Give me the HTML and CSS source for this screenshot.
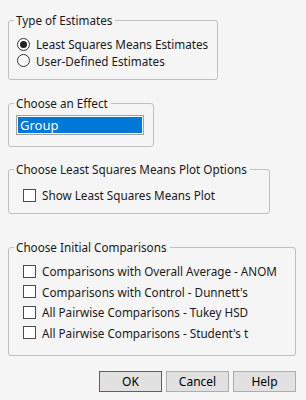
FILE: index.html
```html
<!DOCTYPE html>
<html lang="en">
<head>
    <meta charset="UTF-8">
    <title>Least Squares Means</title>
    <link rel="stylesheet" href="styles.css">
</head>
<body>
    <div class="dialog">
        <fieldset class="group type">
            <legend>Type of Estimates</legend>
            <label class="row"><span class="radio checked"></span>Least Squares Means Estimates</label>
            <label class="row"><span class="radio"></span>User-Defined Estimates</label>
        </fieldset>

        <fieldset class="group effect">
            <legend>Choose an Effect</legend>
            <div class="listbox"><div class="item selected">Group</div></div>
        </fieldset>

        <fieldset class="group plot">
            <legend>Choose Least Squares Means Plot Options</legend>
            <label class="row"><span class="check"></span>Show Least Squares Means Plot</label>
        </fieldset>

        <fieldset class="group compare">
            <legend>Choose Initial Comparisons</legend>
            <label class="row"><span class="check"></span>Comparisons with Overall Average - ANOM</label>
            <label class="row"><span class="check"></span>Comparisons with Control - Dunnett's</label>
            <label class="row"><span class="check"></span>All Pairwise Comparisons - Tukey HSD</label>
            <label class="row"><span class="check"></span>All Pairwise Comparisons - Student's t</label>
        </fieldset>

        <div class="buttons">
            <button class="default">OK</button>
            <button>Cancel</button>
            <button>Help</button>
        </div>
    </div>
</body>
</html>
```

FILE: styles.css
```css
body {
    margin: 0;
    background: #f5f5f5;
    font-family: 'Noto Sans', 'Open Sans', sans-serif;
    font-size: 11.7px;
    color: #1a1a1a;
}
.dialog {
    padding: 12px 0 0 8px;
}
.group {
    margin: 0;
    padding: 0;
    border: 1px solid #c0c0c0;
    border-radius: 3px;
    box-sizing: border-box;
    min-width: 0;
}
.group legend {
    margin-left: 5px;
    padding: 0 3px 0 2px;
    line-height: 16px;
    height: 16px;
    white-space: nowrap;
}
.row {
    display: flex;
    align-items: center;
    height: 16.5px;
    white-space: nowrap;
}
.radio {
    width: 11px;
    height: 11px;
    border: 1px solid #333;
    border-radius: 50%;
    margin-right: 6px;
    display: flex;
    align-items: center;
    justify-content: center;
    background: #fff;
}
.radio.checked::after {
    content: "";
    width: 7px;
    height: 7px;
    border-radius: 50%;
    background: #222;
}
.check {
    width: 11px;
    height: 11px;
    border: 1px solid #4a4a4a;
    background: #fff;
    margin-right: 6px;
}
.type {
    width: 210px;
    padding: 8px 0 10px 8px;
}
.type legend {
    margin-left: -3px;
}
.effect {
    width: 146px;
    margin-top: 15px;
    padding: 4px 0 11px 7px;
}
.effect legend {
    margin-left: -2px;
}
.listbox {
    width: 128px;
    height: 20px;
    border: 1px solid #a0a0a0;
    box-sizing: border-box;
    background: #fff;
    padding: 1px;
}
.item {
    height: 16px;
    line-height: 16px;
    padding-left: 2px;
    font-size: 13px;
}
.item.selected {
    background: #0078d7;
    color: #fff;
}
.plot {
    width: 262px;
    margin-top: 14px;
    padding: 8px 0 8px 14px;
}
.plot legend {
    margin-left: -9px;
}
.plot .row {
    height: 20px;
}
.compare {
    width: 288px;
    margin-top: 25px;
    padding: 6px 0 12px 14px;
}
.compare legend {
    margin-left: -9px;
}
.compare .row {
    height: 20.5px;
}
.buttons {
    display: flex;
    justify-content: flex-end;
    gap: 4px;
    width: 288px;
    margin-top: 15px;
}
button {
    width: 63px;
    height: 21px;
    padding: 0;
    font-family: inherit;
    font-size: 12px;
    color: #000;
    background: #e1e1e1;
    border: 1px solid #adadad;
}
button.default {
    border: 1px solid #0078d7;
}
```
